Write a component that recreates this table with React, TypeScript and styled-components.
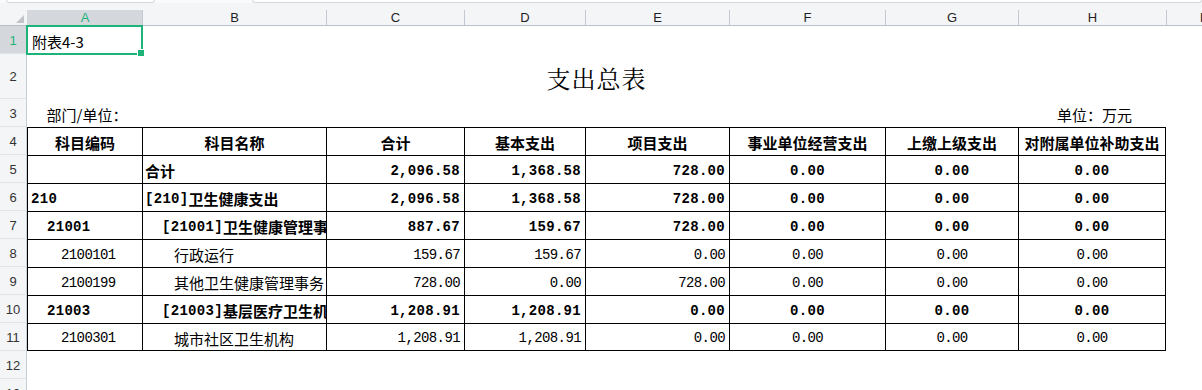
import styled, { createGlobalStyle, css } from "styled-components";

// grid columns: row header, A..H, then the partly visible I
const COLS = "27px 115px 184px 138px 121px 144px 156px 133px 148px 70px";
const LETTERS = ["A", "B", "C", "D", "E", "F", "G", "H", "I"];

const CJK = `"Noto Sans CJK SC", "Noto Sans", sans-serif`;
const MONO = `"Liberation Mono", "DejaVu Sans Mono", monospace`;
const GREEN = "#1db47a";

type Level = 0 | 1 | 2;

type Line = {
  code: string;
  name: string;
  level: Level;
  vals: string[];
};

const HEADS = [
  "科目编码",
  "科目名称",
  "合计",
  "基本支出",
  "项目支出",
  "事业单位经营支出",
  "上缴上级支出",
  "对附属单位补助支出",
];

const ZEROS = ["0.00", "0.00", "0.00"];

const LINES: Line[] = [
  { code: "", name: "合计", level: 0, vals: ["2,096.58", "1,368.58", "728.00", ...ZEROS] },
  { code: "210", name: "[210]卫生健康支出", level: 0, vals: ["2,096.58", "1,368.58", "728.00", ...ZEROS] },
  { code: "21001", name: "[21001]卫生健康管理事务", level: 1, vals: ["887.67", "159.67", "728.00", ...ZEROS] },
  { code: "2100101", name: "行政运行", level: 2, vals: ["159.67", "159.67", "0.00", ...ZEROS] },
  { code: "2100199", name: "其他卫生健康管理事务", level: 2, vals: ["728.00", "0.00", "728.00", ...ZEROS] },
  { code: "21003", name: "[21003]基层医疗卫生机构", level: 1, vals: ["1,208.91", "1,208.91", "0.00", ...ZEROS] },
  { code: "2100301", name: "城市社区卫生机构", level: 2, vals: ["1,208.91", "1,208.91", "0.00", ...ZEROS] },
];

// indents per level, column A and column B
const CODE_PAD = [3, 19, 33];
const NAME_PAD = [2, 19, 31];

const GlobalStyle = createGlobalStyle`
  * {
    margin: 0;
    padding: 0;
    box-sizing: border-box;
  }

  body {
    background: #ffffff;
    font-family: ${CJK};
    color: #000;
    overflow: hidden;
  }
`;

const Sheet = styled.div`
  width: 1202px;
  height: 390px;
  overflow: hidden;
  background: #ffffff;
`;

const TopStrip = styled.div`
  height: 3px;
  display: flex;
  background: #fbfbfc;
`;

const InputBox = styled.div<{ $left: number; $width?: number }>`
  margin-left: ${(p) => p.$left}px;
  ${(p) => (p.$width ? `width: ${p.$width}px;` : "flex: 1;")}
  height: 3px;
  background: #ffffff;
  border: 1px solid #d6d8dc;
  border-top: none;
  border-radius: 0 0 3px 3px;
`;

const HeaderBar = styled.div`
  display: grid;
  grid-template-columns: ${COLS};
  height: 23px;
  align-items: end;
  background: #f4f5f7;
  border-bottom: 1px solid #b7c0cd;
`;

const Corner = styled.div`
  height: 22px;
  display: flex;
  align-items: flex-end;
  justify-content: flex-end;
  padding: 0 3px 2px 0;
`;

const CornerMark = styled.span`
  width: 0;
  height: 0;
  border-left: 8px solid transparent;
  border-bottom: 8px solid #c0c3c8;
`;

const ColLabel = styled.div<{ $active?: boolean }>`
  height: 15px;
  display: flex;
  align-items: center;
  justify-content: center;
  font-family: "Liberation Sans", Arial, sans-serif;
  font-size: 13px;
  color: ${(p) => (p.$active ? GREEN : "#1f1f1f")};
  background: ${(p) => (p.$active ? "#d4d7dc" : "transparent")};
  border-left: 1px solid ${(p) => (p.$active ? "#d4d7dc" : "#c2c9d3")};
`;

const Row = styled.div<{ $height: number }>`
  display: grid;
  grid-template-columns: ${COLS};
  height: ${(p) => p.$height}px;
`;

const RowHead = styled.div<{ $active?: boolean }>`
  display: flex;
  align-items: center;
  justify-content: center;
  padding-top: 1px;
  font-family: "Liberation Sans", Arial, sans-serif;
  font-size: 13px;
  color: ${(p) => (p.$active ? GREEN : "#333333")};
  background: ${(p) => (p.$active ? "#d4d7dc" : "#f4f5f7")};
  border-right: 1px solid #c8cdd5;
  border-bottom: 1px solid #dfe2e6;
`;

const Plain = styled.div<{ $align?: "left" | "center" }>`
  position: relative;
  display: flex;
  align-items: center;
  justify-content: ${(p) => (p.$align === "center" ? "center" : "flex-start")};
  padding: 2px 0 0 5px;
  font-size: 15px;
  white-space: nowrap;
`;

const Selection = styled.div`
  position: absolute;
  top: -1px;
  left: -1px;
  width: 117px;
  height: 30px;
  border: 2px solid ${GREEN};
  pointer-events: none;

  &::after {
    content: "";
    position: absolute;
    right: -4px;
    bottom: -4px;
    width: 6px;
    height: 6px;
    background: ${GREEN};
    border: 1px solid #ffffff;
  }
`;

const Title = styled.div`
  grid-column: 2 / span 8;
  display: flex;
  align-items: center;
  justify-content: center;
  padding-top: 2px;
  font-family: "Noto Serif CJK SC", ${CJK};
  font-size: 24px;
  letter-spacing: 1px;
`;

const Td = styled.div<{
  $align?: "left" | "center" | "right";
  $bold?: boolean;
  $mono?: boolean;
  $pad?: number;
  $last?: boolean;
  $bottom?: boolean;
}>`
  display: flex;
  align-items: center;
  justify-content: ${(p) =>
    p.$align === "center" ? "center" : p.$align === "right" ? "flex-end" : "flex-start"};
  padding: 2px ${(p) => (p.$align === "center" ? 0 : 4)}px 0 ${(p) => p.$pad ?? 0}px;
  overflow: hidden;
  white-space: nowrap;
  border-top: 1px solid #000;
  border-left: 1px solid #000;
  ${(p) => p.$last && "border-right: 1px solid #000;"}
  ${(p) => p.$bottom && "border-bottom: 1px solid #000;"}
  font-weight: ${(p) => (p.$bold ? 700 : 400)};
  ${(p) =>
    p.$mono
      ? css`
          font-family: ${MONO};
          font-size: 14px;
          letter-spacing: ${p.$bold ? "0.3px" : "-0.6px"};
        `
      : css`
          font-size: 15px;
        `}
`;

const Mono = styled.span<{ $bold?: boolean }>`
  font-family: ${MONO};
  font-size: 14px;
  letter-spacing: ${(p) => (p.$bold ? "0.3px" : "-0.6px")};
`;

function NameText({ name, bold }: { name: string; bold: boolean }) {
  const end = name.indexOf("]");
  if (!name.startsWith("[") || end < 0) return <>{name}</>;
  return (
    <>
      <Mono $bold={bold}>{name.slice(0, end + 1)}</Mono>
      {name.slice(end + 1)}
    </>
  );
}

export default function App() {
  return (
    <>
      <GlobalStyle />
      <Sheet>
        <TopStrip>
          <InputBox $left={6} $width={149} />
          <InputBox $left={97} />
        </TopStrip>

        <HeaderBar>
          <Corner>
            <CornerMark />
          </Corner>
          {LETTERS.map((l) => (
            <ColLabel key={l} $active={l === "A"}>
              {l}
            </ColLabel>
          ))}
        </HeaderBar>

        {/* 1 */}
        <Row $height={28}>
          <RowHead $active>1</RowHead>
          <Plain>
            附表4-3
            <Selection />
          </Plain>
        </Row>

        {/* 2 */}
        <Row $height={45}>
          <RowHead>2</RowHead>
          <Title>支出总表</Title>
        </Row>

        {/* 3 */}
        <Row $height={28}>
          <RowHead>3</RowHead>
          <Plain $align="center">部门/单位：</Plain>
          <div />
          <div />
          <div />
          <div />
          <div />
          <div />
          <Plain $align="center">单位：万元</Plain>
        </Row>

        {/* 4: table head */}
        <Row $height={28}>
          <RowHead>4</RowHead>
          {HEADS.map((h, i) => (
            <Td key={h} $align="center" $bold $last={i === HEADS.length - 1}>
              {h}
            </Td>
          ))}
        </Row>

        {LINES.map((line, r) => {
          const bold = line.level < 2;
          const bottom = r === LINES.length - 1;
          return (
            <Row key={r} $height={28}>
              <RowHead>{r + 5}</RowHead>
              <Td $mono $bold={bold} $pad={CODE_PAD[line.level]} $bottom={bottom}>
                {line.code}
              </Td>
              <Td $bold={bold} $pad={NAME_PAD[line.level]} $bottom={bottom}>
                <NameText name={line.name} bold={bold} />
              </Td>
              {line.vals.map((v, i) => (
                <Td
                  key={i}
                  $mono
                  $bold={bold}
                  $align={i < 3 ? "right" : "center"}
                  $last={i === line.vals.length - 1}
                  $bottom={bottom}
                >
                  {v}
                </Td>
              ))}
            </Row>
          );
        })}

        <Row $height={28}>
          <RowHead>12</RowHead>
        </Row>
        <Row $height={28}>
          <RowHead>13</RowHead>
        </Row>
      </Sheet>
    </>
  );
}
